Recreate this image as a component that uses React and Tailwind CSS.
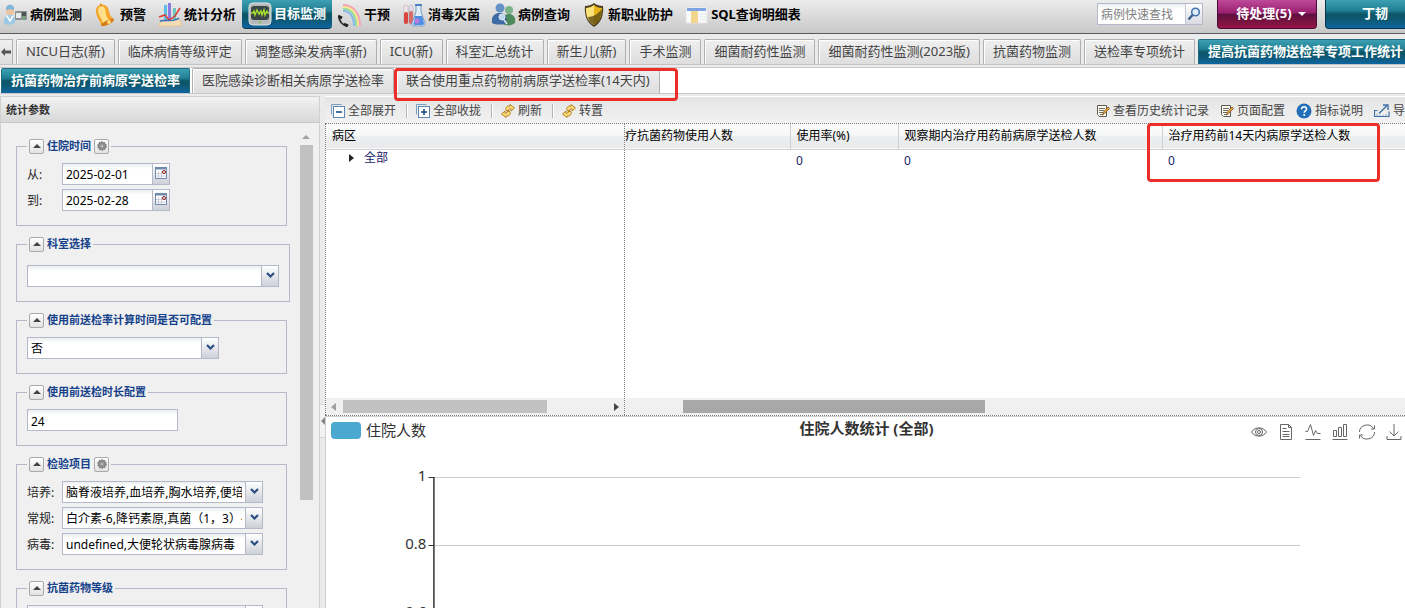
import { useState } from 'react';

const MENU = [
  { label: '病例监测', icon: DoctorIcon },
  { label: '预警', icon: BellIcon },
  { label: '统计分析', icon: StatsIcon },
  { label: '目标监测', icon: MonitorIcon },
  { label: '干预', icon: PhoneIcon },
  { label: '消毒灭菌', icon: FlaskIcon },
  { label: '病例查询', icon: PeopleIcon },
  { label: '新职业防护', icon: ShieldIcon },
  { label: 'SQL查询明细表', icon: SheetIcon },
];

const TABS = [
  'NICU日志(新)',
  '临床病情等级评定',
  '调整感染发病率(新)',
  'ICU(新)',
  '科室汇总统计',
  '新生儿(新)',
  '手术监测',
  '细菌耐药性监测',
  '细菌耐药性监测(2023版)',
  '抗菌药物监测',
  '送检率专项统计',
  '提高抗菌药物送检率专项工作统计',
];

const SUB_TABS = [
  '抗菌药物治疗前病原学送检率',
  '医院感染诊断相关病原学送检率',
  '联合使用重点药物前病原学送检率(14天内)',
];

const TEAL =
  'bg-[linear-gradient(#3d9fb3_0%,#217f93_38%,#0d5566_50%,#0d5873_70%,#0e66a0_100%)]';

/* ---------- menu icons ---------- */

function DoctorIcon() {
  return (
    <svg viewBox="0 0 24 24" className="size-6 shrink-0">
      <path d="M0 21c-1-6 2-9 6-9s6 3 5 8c-3 2-8 2-11 1z" fill="#9cc9e6" />
      <circle cx="6" cy="8" r="4" fill="#e9c3a0" />
      <path d="M2 7c-1-7 9-7 8 0-2-1-6-1-8 0z" fill="#7fb6dc" />
      <path d="M3 13l3 5 3-5" fill="none" stroke="#fff" strokeWidth="1.500" />
      <rect x="11" y="8" width="12" height="9" rx="1" fill="#8b9292" />
      <rect x="12" y="10" width="5" height="5" fill="#e8eaea" />
      <rect x="18" y="9" width="4" height="4" fill="#4c5656" />
      <rect x="19" y="14" width="2" height="2" fill="#58b858" />
    </svg>
  );
}

function BellIcon() {
  return (
    <svg viewBox="0 0 24 24" className="size-6 shrink-0">
      <path d="M3 4c3-3 9-3 11 1 2 5 1 8 6 11L7 23c0-5-3-6-4-10-1-3-2-6 0-9z" fill="#f4a52a" />
      <path d="M5 4c2-2 5-1 6 2 1 5 1 8 4 11l-6 3C8 15 4 12 4 7z" fill="#ffe08a" />
      <path d="M7 23c0-3 9-8 13-7 0 4-9 8-13 7z" fill="#d37c14" />
      <circle cx="15" cy="19" r="2" fill="#ffd873" />
      <circle cx="7" cy="2" r="1.500" fill="#e8962a" />
    </svg>
  );
}

function StatsIcon() {
  return (
    <svg viewBox="0 0 24 24" className="size-6 shrink-0">
      <path d="M4 17h18l2 6H0z" fill="#f4ddb4" stroke="#d8b67c" strokeWidth="0.500" />
      <rect x="6" y="2" width="3" height="15" fill="#5ac0e8" />
      <rect x="10" y="0" width="3" height="17" fill="#8f7ae0" />
      <rect x="15" y="5" width="3" height="12" fill="#6fc5c0" />
      <path d="M1 14l6-2 4 5 6-4 5-8" fill="none" stroke="#d83c38" strokeWidth="1.500" />
      <path d="M2 18c5-2 13 2 19-3" fill="none" stroke="#3c6db4" strokeWidth="1.500" />
    </svg>
  );
}

function MonitorIcon() {
  return (
    <svg viewBox="0 0 24 24" className="size-6 shrink-0">
      <rect x="1" y="1" width="22" height="22" rx="4" fill="#b5baba" stroke="#e4e6e6" />
      <rect x="3" y="4" width="18" height="14" rx="3" fill="#3c4646" />
      <path
        d="M3 11h2l1-2 1 4 2-5 2 4 2-3 1 4 2-5 1 5 2-4 1 2h1"
        fill="none"
        stroke="#a6e02c"
        strokeWidth="1.400"
      />
      <path d="M11 20h2l-1 1z" fill="#7bc522" stroke="#7bc522" />
    </svg>
  );
}

function PhoneIcon() {
  return (
    <svg viewBox="0 0 24 24" className="size-6 shrink-0" fill="none">
      <path d="M5 2c10 0 17 8 17 21" stroke="#f4a3b4" strokeWidth="2" />
      <path d="M5 4c9 0 15 7 15 19" stroke="#f3e58c" strokeWidth="2" />
      <path d="M5 6c8 0 13 6 13 17" stroke="#8edba0" strokeWidth="2" />
      <path d="M5 8c7 0 11 6 11 15" stroke="#8cb8ee" strokeWidth="2" />
      <path d="M1 13c0 5 3 9 8 10" stroke="#333" strokeWidth="2" />
      <path d="M0 13l4 2M6 21l4 2" stroke="#222" strokeWidth="3" />
    </svg>
  );
}

function FlaskIcon() {
  return (
    <svg viewBox="0 0 24 24" className="size-6 shrink-0">
      <rect x="2" y="2" width="4" height="19" rx="2" fill="#f2e4e4" stroke="#aaa" strokeWidth="0.500" />
      <rect x="2" y="9" width="4" height="12" rx="2" fill="#d9443c" />
      <rect x="7" y="2" width="4" height="20" rx="2" fill="#e3dcec" stroke="#aaa" strokeWidth="0.500" />
      <rect x="7" y="8" width="4" height="13" rx="2" fill="#d86c6c" />
      <path d="M14 2h5v7l4 11c0 2-1 3-2 3h-9c-2 0-2-1-2-3l4-11z" fill="#e0eefa" stroke="#7a9ac2" />
      <path d="M13 13h7l2 7c0 2-1 2-2 2h-7c-2 0-2-1-1-3z" fill="#4d8fe0" />
      <circle cx="15" cy="18" r="2.500" fill="#bf7ae0" />
      <rect x="13" y="1" width="7" height="2" fill="#4e7fc0" />
    </svg>
  );
}

function PeopleIcon() {
  return (
    <svg viewBox="0 0 24 24" className="size-6 shrink-0">
      <circle cx="17" cy="7" r="4" fill="#7cb48a" />
      <path d="M10 21c-1-7 3-10 7-10s7 3 6 9c-3 3-9 3-13 1z" fill="#4d8a5c" />
      <circle cx="8" cy="5" r="4.500" fill="#6492c4" />
      <path d="M0 20c-1-7 3-10 8-10s7 3 6 10c-3 2-10 2-14 0z" fill="#3d6aa4" />
      <circle cx="10" cy="14" r="3" fill="#bcd6f2" stroke="#dfe9f4" />
      <path d="M12 17l3 4" stroke="#dfe9f4" strokeWidth="1.500" />
    </svg>
  );
}

function ShieldIcon() {
  return (
    <svg viewBox="0 0 24 24" className="size-6 shrink-0">
      <path d="M12 0c2 2 6 3 9 3 1 9-2 17-9 21C5 20 2 12 3 3c3 0 7-1 9-3z" fill="#4a4021" />
      <path d="M12 2c2 2 5 3 8 3 0 8-2 13-8 17C6 18 4 13 4 5c3 0 6-1 8-3z" fill="#e8b41c" />
      <path d="M12 2v20C6 18 4 13 4 5c3 0 6-1 8-3z" fill="#fbe27a" />
      <path d="M6 14c5 0 10-3 14-8-1 9-3 13-8 16-3-2-5-4-6-8z" fill="#5e4a12" opacity="0.800" />
    </svg>
  );
}

function SheetIcon() {
  return (
    <svg viewBox="0 0 24 24" className="size-6 shrink-0">
      <rect x="1" y="4" width="21" height="16" fill="#fafafa" stroke="#e4e4e4" />
      <rect x="2" y="5" width="19" height="3" fill="#7ea4e4" />
      <rect x="6" y="8" width="7" height="12" fill="#f3d68e" />
      <path d="M14 11h7M14 14h7M14 17h7" stroke="#e3e7ee" />
    </svg>
  );
}

/* ---------- small icons ---------- */

function TreeBoxIcon({ plus }) {
  return (
    <svg viewBox="0 0 14 14" className="size-3.5 shrink-0" fill="none">
      <path d="M0.500 10.500v-10h10" stroke="#7c9cc0" />
      <rect x="2.500" y="2.500" width="11" height="11" fill="#fff" stroke="#5b85b2" />
      <path d="M5 8h6" stroke="#1d4f86" strokeWidth="1.600" />
      {plus && <path d="M8 5v6" stroke="#1d4f86" strokeWidth="1.600" />}
    </svg>
  );
}

function RefreshIcon() {
  return (
    <svg viewBox="0 0 14 14" className="size-3.5 shrink-0" fill="#fbd977" stroke="#b07c1c" strokeWidth="0.900">
      <path d="M5 6.500c-1-3 1-5 4-4.500V0.500L13.500 4 10 7V5C8.500 4.500 8 5 8 6.500z" />
      <path d="M9 7.500c1 3-1 5-4 4.500v1.500L0.500 10 4 7v2c1.500.5 2 0 2-1.500z" />
    </svg>
  );
}

function NoteIcon() {
  return (
    <svg viewBox="0 0 14 14" className="size-3.5 shrink-0">
      <path d="M1.500 1.500h9v11h-7l-2-2z" fill="#fdfdf4" stroke="#5b5b53" />
      <path d="M3 4.500h6M3 6.500h5M3 8.500h4M4 10.500h3" stroke="#6d6d60" />
      <path d="M6.500 11l1-3 4.500-5 1.500 1.500-5 5z" fill="#eda83e" stroke="#7a4a1c" strokeWidth="0.800" />
    </svg>
  );
}

function HelpIcon() {
  return (
    <svg viewBox="0 0 16 16" className="size-4 shrink-0">
      <circle cx="8" cy="8" r="7.500" fill="#2470b8" />
      <path d="M5.500 6.200c0-3.400 5.200-3.200 5 0-.1 1.600-2.300 1.700-2.300 3.600" fill="none" stroke="#fff" strokeWidth="1.600" />
      <circle cx="8.200" cy="12" r="1" fill="#fff" />
    </svg>
  );
}

function ExportIcon() {
  return (
    <svg viewBox="0 0 16 14" className="h-3.5 w-4 shrink-0" fill="none" stroke="#3f6fa6">
      <path d="M3.500 6.500h-3v6h14.500v-5" strokeWidth="1.200" />
      <path d="M3 12v-2M6 12v-1M9 12v-1M12 12v-2" stroke="#8aa0c0" />
      <path d="M5 9.500L13 1.500" strokeWidth="1.400" />
      <path d="M9 1h5v5" strokeWidth="1.400" />
    </svg>
  );
}

function CalendarIcon() {
  return (
    <svg viewBox="0 0 12 12" className="size-3">
      <rect x="0.500" y="0.500" width="11" height="11" fill="#fff" stroke="#6f8aab" />
      <rect x="0" y="0" width="12" height="2.500" fill="#6f8aab" />
      <path d="M3.500 4v7M6.500 4v7M1 6.500h10M1 9h10" stroke="#c9ccd6" />
      <circle cx="9" cy="5" r="1.500" fill="#fff" stroke="#8e1414" />
    </svg>
  );
}

function GearIcon() {
  return (
    <svg viewBox="0 0 10 10" className="size-2.5">
      <circle cx="5" cy="5" r="4" fill="#8d8d8d" stroke="#777" strokeWidth="1.500" strokeDasharray="1.500 1" />
      <circle cx="5" cy="5" r="1.500" fill="#b8b8b8" />
    </svg>
  );
}

function ChevronIcon() {
  return (
    <svg viewBox="0 0 9 6" className="h-1.5 w-[9px]" fill="none">
      <path d="M1 1l3.500 3.500L8 1" stroke="#2c4f80" strokeWidth="2.200" />
    </svg>
  );
}

function Arrow({ className, d }) {
  return (
    <svg viewBox="0 0 8 8" className={`size-2 shrink-0 ${className}`} fill="currentColor">
      <path d={d} />
    </svg>
  );
}

/* ---------- header ---------- */

function Header() {
  return (
    <header className="flex h-[34px] shrink-0 items-start justify-between border-b border-[#5a5a62] bg-linear-to-b from-[#ececec] to-[#c8c8c8]">
      <nav className="flex shrink-0">
        {MENU.map(({ label, icon: Icon }) => (
          <button
            key={label}
            type="button"
            className={
              label === '目标监测'
                ? `flex h-[29px] items-center gap-0.5 rounded-b-sm border-b border-[#12334a] px-1.5 text-[13px] font-bold whitespace-nowrap text-white ${TEAL}`
                : 'flex h-[29px] items-center gap-0.5 px-1.5 text-[13px] font-bold whitespace-nowrap text-black first:pl-1'
            }
          >
            <Icon />
            {label}
          </button>
        ))}
      </nav>
      <div className="flex shrink-0 items-start">
        <form className="mt-[3px] mr-3.5 flex h-[22px] w-[106px] border border-[#b5b8c8] bg-white">
          <input
            type="text"
            aria-label="病例快速查找"
            placeholder="病例快速查找"
            className="w-[87px] min-w-0 bg-linear-to-b from-[#eceeef] to-white to-25% pt-0.5 pl-[3px] text-[12px] outline-none placeholder:text-[#808080]"
          />
          <button
            type="button"
            aria-label="查找"
            className="flex flex-1 items-center justify-center border-l border-[#c5c8d4] bg-linear-to-b from-white to-[#d8dbe2]"
          >
            <svg viewBox="0 0 14 14" className="size-3.5" fill="none">
              <circle cx="8.500" cy="5" r="3.800" fill="#e2eefb" stroke="#4675ae" strokeWidth="1.600" />
              <path d="M5.500 8L1.500 12.500" stroke="#35608f" strokeWidth="2.400" />
            </svg>
          </button>
        </form>
        <button
          type="button"
          className="mr-2 flex h-[29px] w-[100px] items-center justify-center gap-1.5 rounded-b-sm border border-t-0 border-[#4c0a35] bg-[linear-gradient(#bf4a9a_0%,#99206f_45%,#5f0f42_52%,#7c1440_80%,#98164a_100%)] pl-2 text-[13px] font-bold text-white"
        >
          待处理(5)
          <Arrow className="text-white" d="M0 2h8L4 6z" />
        </button>
        <button
          type="button"
          className={`flex h-[29px] w-20 items-center justify-end rounded-bl-sm border-b border-l border-[#0c3348] pr-[17px] text-[13px] font-bold text-white ${TEAL}`}
        >
          丁韧
        </button>
      </div>
    </header>
  );
}

function Tab({ label, active, onClick }) {
  const base = 'h-[25px] shrink-0 rounded-t-xs px-[9px] text-[13px] whitespace-nowrap';
  return (
    <button
      type="button"
      onClick={onClick}
      className={
        active
          ? `${base} border border-b-0 border-[#1d6d80] font-bold text-white ${TEAL}`
          : `${base} border border-b-0 border-[#b0b0b0] bg-linear-to-b from-[#efefef] to-[#dedede] text-[#444] inset-shadow-[1px_1px_0_#fff]`
      }
    >
      {label}
    </button>
  );
}

/* ---------- left panel ---------- */

function Group({ title, gear, wide, children }) {
  return (
    <fieldset
      className={
        wide
          ? 'w-[274px] border border-[#b5b8c8] px-2.5 pt-[13px] pb-3.5'
          : 'w-[271px] border border-[#b5b8c8] px-2.5 pt-[9px] pb-3.5'
      }
    >
      <legend className="h-4 px-0.5">
        <div className="flex h-4 items-center gap-[3px] text-[11px] font-bold text-[#15428b]">
          <button
            type="button"
            aria-label="折叠"
            className="flex size-[15px] items-center justify-center rounded-xs border border-[#aaa] bg-linear-to-b from-white to-[#e2e2e2]"
          >
            <Arrow className="text-[#444]" d="M0 6h8L4 2z" />
          </button>
          <span className="leading-4">{title}</span>
          {gear && (
            <button
              type="button"
              aria-label="设置"
              className="flex size-[15px] items-center justify-center rounded-xs border border-[#aaa] bg-linear-to-b from-white to-[#e2e2e2]"
            >
              <GearIcon />
            </button>
          )}
        </div>
      </legend>
      <div className="flex flex-col gap-1">{children}</div>
    </fieldset>
  );
}

function DateField({ id, label, value }) {
  return (
    <div className="flex h-[22px] items-center">
      <label htmlFor={id} className="w-[35px] pt-0.5 text-[12px] text-[#222]">
        {label}
      </label>
      <div className="flex h-[22px] w-[108px] border border-[#b5b8c8]">
        <input
          id={id}
          type="text"
          defaultValue={value}
          className="w-[89px] min-w-0 bg-white bg-linear-to-b from-[#eceeef] to-white to-25% pt-0.5 pl-[3px] text-[12px] text-black outline-none"
        />
        <button
          type="button"
          aria-label="选择日期"
          className="flex flex-1 items-start justify-center border-l border-[#b5b8c8] bg-linear-to-b from-white to-[#cdd0d8] pt-[3px]"
        >
          <CalendarIcon />
        </button>
      </div>
    </div>
  );
}

function Combo({ id, label, name, value, width }) {
  return (
    <div className="flex h-[22px] items-center">
      {label && (
        <label htmlFor={id} className="w-[35px] shrink-0 pt-0.5 text-[12px] whitespace-nowrap text-[#222]">
          {label}
        </label>
      )}
      <div className={`relative h-[22px] ${width}`}>
        <select
          id={id}
          aria-label={name}
          className="block h-[22px] w-full appearance-none border border-[#b5b8c8] bg-white bg-linear-to-b from-[#eceeef] to-white to-25% pt-0.5 pr-5 pl-[3px] text-[12px] text-black outline-none [text-spacing-trim:space-all]"
        >
          <option>{value}</option>
        </select>
        <span className="pointer-events-none absolute top-px right-px flex h-5 w-[17px] justify-center border-l border-[#b5b8c8] bg-linear-to-b from-white to-[#cdd0d8] pt-1.5">
          <ChevronIcon />
        </span>
      </div>
    </div>
  );
}

function ParamPanel() {
  return (
    <aside className="flex w-[320px] shrink-0 flex-col border border-b-0 border-[#d0d0d0] bg-[#f0f0f0]">
      <h2 className="h-[26px] shrink-0 border-b border-[#c8c8c8] bg-linear-to-b from-[#f2f2f2] to-[#d8d8d8] pl-[5px] text-[11px] leading-[26px] font-bold text-[#333]">
        统计参数
      </h2>
      <div className="flex min-h-0 flex-1 justify-between">
        <form className="flex flex-col gap-2.5 overflow-hidden pt-[15px] pl-[15px]">
          <Group title="住院时间" gear>
            <DateField id="from" label="从:" value="2025-02-01" />
            <DateField id="to" label="到:" value="2025-02-28" />
          </Group>
          <Group title="科室选择" wide>
            <Combo id="dept" name="科室选择" value="" width="w-[252px]" />
          </Group>
          <Group title="使用前送检率计算时间是否可配置">
            <Combo id="configurable" name="是否可配置" value="否" width="w-[192px]" />
          </Group>
          <Group title="使用前送检时长配置">
            <input
              type="text"
              aria-label="使用前送检时长配置"
              defaultValue="24"
              className="h-[22px] w-[151px] border border-[#b5b8c8] bg-white bg-linear-to-b from-[#eceeef] to-white to-25% pt-0.5 pl-[3px] text-[12px] text-black outline-none"
            />
          </Group>
          <Group title="检验项目" gear>
            <Combo id="culture" label="培养:" value="脑脊液培养,血培养,胸水培养,便培养" width="w-[201px]" />
            <Combo id="routine" label="常规:" value="白介素-6,降钙素原,真菌（1，3）-" width="w-[201px]" />
            <Combo id="virus" label="病毒:" value="undefined,大便轮状病毒腺病毒" width="w-[201px]" />
          </Group>
          <Group title="抗菌药物等级">
            <Combo id="level" name="抗菌药物等级" value="" width="w-[236px]" />
          </Group>
        </form>
        <div className="mr-[5px] flex w-4 flex-col items-center gap-1 pt-2.5">
          <Arrow className="text-[#a0a0a0]" d="M0 6h8L4 2z" />
          <div className="h-[355px] w-[13px] bg-[#c1c1c1]" />
        </div>
      </div>
    </aside>
  );
}

/* ---------- right side ---------- */

function ToolButton({ icon, children }) {
  return (
    <button type="button" className="flex items-center gap-[3px] text-[12px] whitespace-nowrap text-[#444]">
      {icon}
      {children}
    </button>
  );
}

function Separator() {
  return <span className="mr-2 ml-2.5 h-3.5 w-0.5 border-l border-[#b4b4b4] bg-white" />;
}

function Toolbar() {
  return (
    <div className="flex h-[26px] shrink-0 items-center justify-between bg-linear-to-b from-[#e4e4e4] to-[#f2f2f2] pt-0.5 pl-1.5">
      <div className="flex items-center">
        <ToolButton icon={<TreeBoxIcon />}>全部展开</ToolButton>
        <Separator />
        <ToolButton icon={<TreeBoxIcon plus />}>全部收拢</ToolButton>
        <Separator />
        <ToolButton icon={<RefreshIcon />}>刷新</ToolButton>
        <Separator />
        <ToolButton icon={<RefreshIcon />}>转置</ToolButton>
      </div>
      <div className="flex items-center gap-[11px]">
        <ToolButton icon={<NoteIcon />}>查看历史统计记录</ToolButton>
        <ToolButton icon={<NoteIcon />}>页面配置</ToolButton>
        <ToolButton icon={<HelpIcon />}>指标说明</ToolButton>
        <ToolButton icon={<ExportIcon />}>导</ToolButton>
      </div>
    </div>
  );
}

const HEAD_BG = 'bg-[linear-gradient(#fbfbfb_0%,#f6f7f7_50%,#edeeef_52%,#e9eaec_100%)]';

function TreeGrid() {
  return (
    <div className="flex h-[293px] shrink-0 border-y border-dotted border-[#777] bg-white">
      <div className="flex w-[300px] shrink-0 flex-col border-x border-dotted border-[#777]">
        <table className="w-full text-left text-[12px]">
          <thead>
            <tr className={`h-[25px] border-b border-[#d0d0d0] ${HEAD_BG}`}>
              <th className="p-0 pl-1.5 font-normal text-black">病区</th>
            </tr>
          </thead>
          <tbody>
            <tr className="h-4">
              <td className="p-0 pl-[22px] leading-4 text-[#1a1a6a]">
                <div className="flex items-center gap-2">
                  <Arrow className="text-[#222]" d="M1 0v8l5-4z" />
                  全部
                </div>
              </td>
            </tr>
          </tbody>
        </table>
        <div className="mt-auto flex h-[17px] items-center bg-[#f0f0f0] px-1">
          <Arrow className="text-[#a0a0a0]" d="M6 0v8L1 4z" />
          <div className="flex-1 px-[5px]">
            <div className="h-[13px] w-[204px] bg-[#c1c1c1]" />
          </div>
          <Arrow className="text-[#444]" d="M2 0v8l5-4z" />
        </div>
      </div>
      <div className="relative flex min-w-0 flex-1 flex-col">
        <table className="w-full table-fixed text-left text-[12px] whitespace-nowrap">
          <colgroup>
            <col className="w-[165px]" />
            <col className="w-[108px]" />
            <col className="w-[264px]" />
            <col />
          </colgroup>
          <thead>
            <tr className={`h-[25px] border-b border-[#d0d0d0] ${HEAD_BG}`}>
              <th className="border-r border-[#d0d0d0] p-0 font-normal">疗抗菌药物使用人数</th>
              <th className="border-r border-[#d0d0d0] p-0 pl-1.5 font-normal">使用率(%)</th>
              <th className="border-r border-[#d0d0d0] p-0 pl-1.5 font-normal">观察期内治疗用药前病原学送检人数</th>
              <th className="p-0 pl-1.5 font-normal">治疗用药前14天内病原学送检人数</th>
            </tr>
          </thead>
          <tbody>
            <tr className="h-6 text-[#1a1a6a]">
              <td className="p-0" />
              <td className="p-0 pl-1.5">0</td>
              <td className="p-0 pl-1.5">0</td>
              <td className="p-0 pl-1.5">0</td>
            </tr>
          </tbody>
        </table>
        <div className="mt-auto flex h-[17px] items-center bg-[#f0f0f0] pl-[58px]">
          <div className="h-[13px] w-[302px] bg-[#a8a8a8]" />
        </div>
        {/* highlight around the 14-day column */}
        <div className="pointer-events-none absolute -top-px left-[522px] h-[59px] w-[233px] rounded-sm border-[3px] border-[#ec2f26]" />
      </div>
    </div>
  );
}

const TOOLBOX = [
  {
    name: '区域缩放',
    d: 'M0.500 8C4 2.500 12 2.500 15.500 8 12 13.500 4 13.500 0.500 8zM8 4.500a3.500 3.500 0 100 7 3.500 3.500 0 100-7M8 6.500a1.500 1.500 0 100 3 1.500 1.500 0 100-3',
  },
  { name: '数据视图', d: 'M2.500 0.500h8l3 3v12h-11zM10.500 0.500v3h3M4.500 4.500h4M4.500 7.500h7M4.500 10.500h7M4.500 12.500h7' },
  { name: '折线图', d: 'M0.500 7.500h2L5.500 0.500l3 11 2-5 2 3h3M0.500 15.500h15' },
  { name: '柱状图', d: 'M1.500 6.500h3v6h-3zM6.500 3.500h3v9h-3zM11.500 0.500h3v12h-3zM0.500 15.500h15' },
  { name: '还原', d: 'M0.500 8A7.500 7 0 0114.500 4.500M15.500 1.500v3.500h-3.500M15.500 8A7.500 7 0 011.500 11.500M0.500 14.500V11h3.500' },
  { name: '保存', d: 'M8 0v12M3.500 7.500L8 12l4.500-4.500M1 12v3.500h14V12' },
];

function Chart() {
  const ticks = [
    { label: '1', y: 60 },
    { label: '0.8', y: 128 },
    { label: '0.6', y: 196 },
  ];
  return (
    <section className="flex min-h-0 flex-1 flex-col overflow-hidden border-t border-l border-[#d0d0d0] bg-white text-[15px]">
      <div className="grid h-[30px] shrink-0 grid-cols-3 items-start pr-[3px] pl-[5px]">
        <button type="button" className="flex items-center gap-[5px] pt-1 leading-[18px] text-[#333]">
          <span className="h-[17px] w-[30px] rounded-sm bg-[#4ba9cf]" />
          住院人数
        </button>
        <h3 className="text-center leading-[22px] font-bold text-[#333]">住院人数统计 (全部)</h3>
        <div className="flex justify-end gap-[11px] pt-[7px]">
          {TOOLBOX.map((tool) => (
            <button key={tool.name} type="button" aria-label={tool.name}>
              <svg viewBox="0 0 16 16" className="size-4" fill="none" stroke="#666">
                <path d={tool.d} />
              </svg>
            </button>
          ))}
        </div>
      </div>
      <svg className="-mt-[30px] h-[400px] w-full shrink-0">
        {ticks.map((t) => (
          <g key={t.label}>
            <line x1="10%" x2="90.300%" y1={t.y + 0.5} y2={t.y + 0.5} stroke="#ccc" />
            <line x1="9.500%" x2="10%" y1={t.y + 0.5} y2={t.y + 0.5} stroke="#333" />
            <text x="9.300%" y={t.y + 4} textAnchor="end" fill="#333">
              {t.label}
            </text>
          </g>
        ))}
        <line x1="10%" x2="10%" y1="60" y2="400" stroke="#333" strokeWidth="1.500" />
      </svg>
    </section>
  );
}

export default function App() {
  const [tab, setTab] = useState(TABS.length - 1);
  const [subTab, setSubTab] = useState(0);

  return (
    <div className="flex h-screen flex-col overflow-hidden bg-[#ebebeb] font-['Noto_Sans','Noto_Sans_CJK_SC',sans-serif]">
      <Header />
      <nav className="flex h-[31px] shrink-0 items-end gap-[3px] overflow-hidden border-b border-[#c4c4c4]">
        <button
          type="button"
          aria-label="向左滚动"
          className="flex h-[25px] w-[13px] shrink-0 items-center justify-center border border-b-0 border-l-0 border-[#b0b0b0] bg-linear-to-b from-[#efefef] to-[#dedede]"
        >
          <svg viewBox="0 0 10 8" className="h-2 w-2.5" fill="#555">
            <path d="M0 4l4-4v2.500h6v3H4V8z" />
          </svg>
        </button>
        {TABS.map((label, i) => (
          <Tab key={label} label={label} active={i === tab} onClick={() => setTab(i)} />
        ))}
      </nav>
      <nav className="mt-0.5 flex h-[27px] shrink-0 items-end gap-0.5 border-y border-[#c8c8c8] bg-white pl-px">
        {SUB_TABS.map((label, i) => (
          <div key={label} className="relative flex">
            <Tab label={label} active={i === subTab} onClick={() => setSubTab(i)} />
            {i === 2 && (
              <div className="pointer-events-none absolute top-0 -left-0.5 z-10 h-[33px] w-[284px] rounded-sm border-[3px] border-[#ec2f26]" />
            )}
          </div>
        ))}
      </nav>
      <div className="mt-0.5 flex min-h-0 flex-1">
        <ParamPanel />
        <div className="w-[5px] shrink-0 pt-[308px]">
          <button
            type="button"
            aria-label="收起"
            className="flex h-[34px] w-[5px] items-center justify-center overflow-hidden border-y border-[#d8d8d8] bg-[#f3f3f3]"
          >
            <Arrow className="text-[#888]" d="M6 0v8L2 4z" />
          </button>
        </div>
        <main className="flex min-w-0 flex-1 flex-col border-t border-white">
          <Toolbar />
          <TreeGrid />
          <Chart />
        </main>
      </div>
    </div>
  );
}
